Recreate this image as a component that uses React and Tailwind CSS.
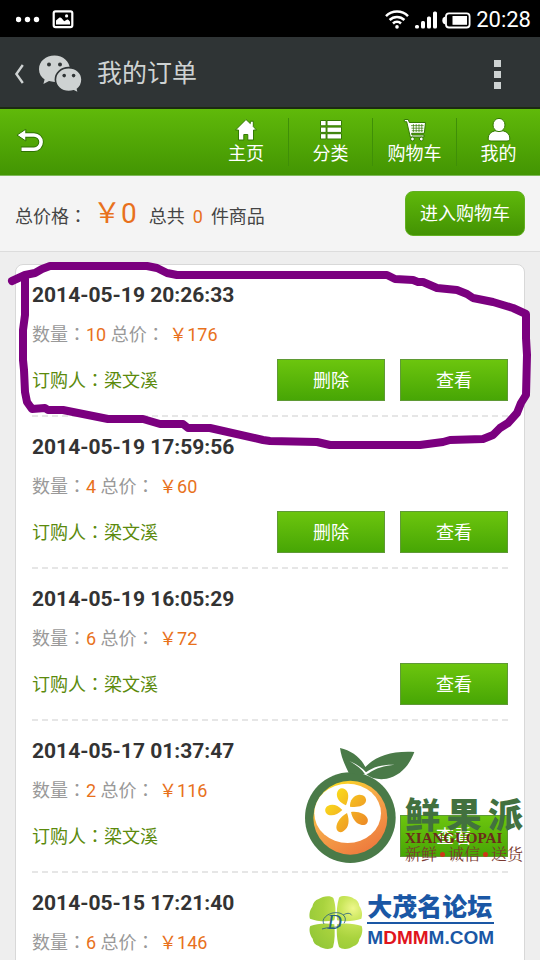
import React from 'react';

const orders = [
  { id: 1, time: '2014-05-19 20:26:33', count: 10, total: 176, buyer: '梁文溪', removable: true },
  { id: 2, time: '2014-05-19 17:59:56', count: 4, total: 60, buyer: '梁文溪', removable: true },
  { id: 3, time: '2014-05-19 16:05:29', count: 6, total: 72, buyer: '梁文溪', removable: false },
  { id: 4, time: '2014-05-17 01:37:47', count: 2, total: 116, buyer: '梁文溪', removable: false },
  { id: 5, time: '2014-05-15 17:21:40', count: 6, total: 146, buyer: '梁文溪', removable: false },
];

// The TC face sets the full-width colon in the middle of its box
const Colon = () => <span lang="zh-TW" className="font-['Noto_Sans_CJK_TC',sans-serif]">：</span>;

const StatusBar = () => (
  <div className="flex h-[37px] shrink-0 items-center bg-black pl-4 pr-[9px] pt-0.5 text-white">
    <svg width="24" height="20" viewBox="0 0 24 20" fill="currentColor" aria-hidden="true">
      <circle cx="2.5" cy="9.5" r="2.7" />
      <circle cx="11.5" cy="9.5" r="2.7" />
      <circle cx="20.5" cy="9.5" r="2.7" />
    </svg>
    <svg className="ml-3" width="22" height="20" viewBox="0 0 22 20" fill="currentColor" aria-hidden="true">
      <rect x="1.7" y="1.3" width="18.6" height="15.8" rx="1.8" fill="none" stroke="currentColor" strokeWidth="2.2" />
      <path d="M4 14.400v-4l3.200-2.600c.8-.6 1.600-.5 2.200.2l2.800 3.200 2.600-1.500c.7-.4 1.300-.3 1.800.3l1.400 1.800v2.600z" />
      <circle cx="14.6" cy="5.9" r="1.6" />
    </svg>
    <div className="ml-auto flex items-center">
      <svg width="26" height="20" viewBox="0 0 26 20" fill="none" stroke="currentColor" strokeWidth="2.5" aria-hidden="true">
        <path d="M2 6.200a15.500 15.500 0 0 1 22 0" />
        <path d="M5.600 10a10.400 10.400 0 0 1 14.800 0" />
        <path d="M9 13.500a5.700 5.700 0 0 1 8 0" />
        <circle cx="13" cy="16.900" r="1.800" fill="currentColor" stroke="none" />
      </svg>
      <svg className="ml-1" width="24" height="20" viewBox="0 0 24 20" fill="currentColor" aria-hidden="true">
        <rect x="1" y="15" width="4" height="3.5" rx="1.5" />
        <rect x="7" y="11" width="4" height="7.5" rx="1.5" />
        <rect x="13" y="6.5" width="4" height="12" rx="1.5" />
        <rect x="19" y="1.5" width="4" height="17" rx="1.5" />
      </svg>
      <svg className="ml-1" width="30" height="20" viewBox="0 0 30 20" fill="currentColor" aria-hidden="true">
        <rect x="4" y="3.3" width="23.6" height="14.2" rx="3" fill="none" stroke="currentColor" strokeWidth="1.8" />
        <path d="M3.500 6.500C1.400 7 .3 8 .3 10.400s1.100 3.600 3.200 4.100z" />
        <rect x="10.5" y="6" width="14.5" height="8.8" />
      </svg>
      <span className="ml-1 text-[22px] leading-none">20:28</span>
    </div>
  </div>
);

const TitleBar = () => (
  <header className="flex h-[72px] shrink-0 items-center border-b-2 border-[#1c2a12] bg-[#2f3435] pl-[13px] pr-[39px] pt-1 text-[#ced2d2]">
    <button type="button" aria-label="返回" className="flex items-center">
      <svg width="12" height="22" viewBox="0 0 12 22" fill="none" stroke="currentColor" strokeWidth="2.4" aria-hidden="true">
        <path d="M9.800 2 3.400 11l6.400 9" />
      </svg>
    </button>
    <svg className="ml-[13px]" width="45" height="38" viewBox="0 0 45 38" aria-hidden="true">
      <path d="M16.500.6C7.800.6 1 6.400 1 14.200c0 4.400 2.200 8 5.600 10.300L5.400 29l5.600-2.900c1.800.5 3.600.8 5.500.8 8.500 0 15.300-5.600 15.300-12.900S25 .6 16.500.6z" fill="currentColor" />
      <circle cx="11" cy="9.6" r="2" fill="#2f3435" />
      <circle cx="22" cy="9.6" r="2" fill="#2f3435" />
      <path d="M30.700 12.600c-7.500 0-13.300 5.200-13.300 12s5.800 12 13.300 12c1.900 0 3.500-.3 5.100-.8l4.700 2.300-1-4c2.900-2.200 4.500-5.600 4.500-9.500 0-6.800-5.800-12-13.300-12z" fill="currentColor" stroke="#2f3435" strokeWidth="1.6" />
      <circle cx="26.2" cy="20.6" r="1.8" fill="#2f3435" />
      <circle cx="35.6" cy="20.6" r="1.8" fill="#2f3435" />
    </svg>
    <h1 className="ml-[14px] text-[25px] leading-8">我的订单</h1>
    <button type="button" aria-label="更多" className="ml-auto flex flex-col gap-1">
      <span className="size-[7px] bg-current" />
      <span className="size-[7px] bg-current" />
      <span className="size-[7px] bg-current" />
    </button>
  </header>
);

const iconProps = {
  width: 24,
  height: 24,
  viewBox: '0 0 24 24',
  fill: '#fff',
  stroke: '#347a04',
  strokeWidth: 1,
  'aria-hidden': true,
};

const HomeIcon = () => (
  <svg {...iconProps}>
    <path d="M12 1.500 1.500 12h3v10h5.300v-5.500h4V22h5.700V12h3l-3.200-3.400V3.200h-3v2.400z" />
  </svg>
);

const ListIcon = () => (
  <svg {...iconProps}>
    <path d="M1.500 2.500h5.600v5.300H1.500zM1.500 9.100h5.600v5.300H1.500zM1.500 15.700h5.600V21H1.500zM8 2.500h14.500v5.300H8zM8 9.100h14.500v5.300H8zM8 15.700h14.500V21H8z" />
  </svg>
);

const CartIcon = () => (
  <svg {...iconProps}>
    <path d="M1.300 1.500h4l1 3h16.200l-1.200 10.800H8.600l.4 1.700h12v2H7.300L3.700 3.700H1.300z" />
    <path d="M8 7.600h12.600M8.400 10.200h12M8.800 12.700h11.400M10.400 6v8M13.200 6v8M16 6v8M18.800 6v8" fill="none" strokeWidth=".7" />
    <circle cx="9.5" cy="21" r="1.9" />
    <circle cx="18.3" cy="21" r="1.9" />
  </svg>
);

const UserIcon = () => (
  <svg {...iconProps}>
    <path d="M4 23c-2 0-3-1-2.800-3 .3-4 2.600-6.200 6.500-7.100h8.600c3.900.9 6.200 3.100 6.500 7.100.2 2-.8 3-2.800 3z" />
    <ellipse cx="12" cy="7" rx="6" ry="6.6" />
  </svg>
);

const navItems = [
  { label: '主页', Icon: HomeIcon },
  { label: '分类', Icon: ListIcon },
  { label: '购物车', Icon: CartIcon },
  { label: '我的', Icon: UserIcon },
];

const NavBar = () => (
  <nav className="flex h-[67px] shrink-0 items-center border-b border-[#7fb85a] bg-linear-to-b from-[#60b90a] to-[#439503] text-white">
    <a href="#back" aria-label="返回上页" className="ml-4">
      <svg width="28" height="26" viewBox="0 0 28 26" fill="none" aria-hidden="true">
        <path d="M9 6h9a6.900 6.900 0 0 1 0 14.200H5" stroke="#2f7203" strokeWidth="5.4" />
        <path d="M1 6.100 9.800.2v11.800z" fill="#fff" stroke="#2f7203" />
        <path d="M8.500 6H18a6.900 6.900 0 0 1 0 14.200H5.500" stroke="#fff" strokeWidth="3.6" />
      </svg>
    </a>
    <ul className="ml-auto flex">
      {navItems.map(({ label, Icon }, i) => (
        <li key={label} className={i > 0 ? 'w-[84px] border-l border-[#3f8f07]' : 'w-[84px]'}>
          <a href={`#nav-${i}`} className="flex flex-col items-center">
            <Icon />
            <span className="text-[18px] leading-6">{label}</span>
          </a>
        </li>
      ))}
    </ul>
  </nav>
);

const Summary = () => (
  <section className="flex h-[76px] shrink-0 items-center justify-between border-b border-[#dcdcdc] bg-[#f4f4f4] px-[15px] text-[18px] text-[#444]">
    <p className="flex items-baseline">
      <span>总价格<Colon /></span>
      <span className="ml-1.5 text-[28px] leading-8 text-[#e8711c]">￥0</span>
      <span className="ml-3">总共</span>
      <span className="mx-2 text-[#e8711c]">0</span>
      <span>件商品</span>
    </p>
    <button type="button" className="h-[45px] rounded-lg border border-[#62b021] bg-linear-to-b from-[#5fb80b] to-[#439303] px-[14px] text-white">
      进入购物车
    </button>
  </section>
);

const OrderButton = ({ children }) => (
  <button type="button" className="h-[42px] w-[108px] border border-[#5f9a35] bg-linear-to-b from-[#6cc50e] to-[#47a605] text-[18px] text-white">
    {children}
  </button>
);

const OrderItem = ({ order }) => (
  <li className="border-b-2 border-dashed border-[#e6e6e6] pb-[14px] pt-4">
    <h2 className="text-[21px] font-bold leading-7 text-[#333]">{order.time}</h2>
    <p className="mt-[10px] text-[18px] leading-7 text-[#999]">
      数量<Colon /><span className="text-[#e8711c]">{order.count}</span> 总价<Colon />{' '}
      <span className="text-[#e8711c]">￥{order.total}</span>
    </p>
    <div className="mt-[10px] flex items-center justify-between">
      <p className="text-[18px] text-[#5b8a0c]">订购人<Colon />{order.buyer}</p>
      <div className="flex gap-[15px]">
        {order.removable && <OrderButton>删除</OrderButton>}
        <OrderButton>查看</OrderButton>
      </div>
    </div>
  </li>
);

// Hand-drawn marker around the newest order
const MarkerLine = () => (
  <svg className="pointer-events-none absolute left-0 top-0" width="540" height="460" viewBox="0 0 540 460" fill="none" stroke="#7b007f" strokeWidth="8" strokeLinecap="round" strokeLinejoin="round" aria-hidden="true">
    <path d="M12 281 25 275 35 273 42 269 50 266H147L157 268 167 273 177 275H387L395 279 413 280 418 282 423 282 437 288 457 290 467 294 473 298 493 302 513 308 526 314V338L527 355 526 395 521 403 517 413 508 423 500 428 493 435 483 439 450 440 443 442 420 445H330L317 442 270 441 263 440 210 428H188L183 424H160L143 419H108L83 414 63 410H48L45 408 32 409 27 402 25 392 24 370 23 360 23 330 25 315V276" />
  </svg>
);

const FruitLogo = () => (
  <div className="pointer-events-none absolute bottom-24 right-[17px] flex items-end">
    <svg width="114" height="118" viewBox="36 48 342 354" aria-hidden="true">
      <defs>
        <linearGradient id="peel" x1="0" y1="0" x2=".6" y2="1">
          <stop offset="0" stopColor="#fde910" />
          <stop offset=".5" stopColor="#f6a94a" />
          <stop offset="1" stopColor="#ee7d3e" />
        </linearGradient>
        <linearGradient id="petal" gradientUnits="userSpaceOnUse" x1="105" y1="190" x2="230" y2="300">
          <stop offset="0" stopColor="#fbe51a" />
          <stop offset="1" stopColor="#ec8428" />
        </linearGradient>
      </defs>
      <circle cx="181" cy="263" r="136" fill="#4a7a48" />
      <path d="M150 54c34 8 62 28 76 57 30-32 78-49 147-45-16 43-44 72-83 80-22 4-46 0-62-14-14 2-30 2-52-4-10-20-22-44-26-74z" fill="#4a7a48" />
      <path d="M178 93c22 9 38 20 50 34 22-18 52-24 86-23-30 3-58 10-78 26l-10 4c-12-18-28-30-48-41z" fill="#fff" />
      <circle cx="181" cy="263" r="111" fill="url(#peel)" />
      <ellipse cx="173" cy="250" rx="100" ry="89" fill="#fff" />
      <g fill="url(#petal)">
        <path d="M168 226c-18-7-30-22-27-37 3-13 14-18 24-11 13 9 12 28 3 48z" />
        <path d="M180 230c-1-19 10-34 27-36 13-1 23 8 21 19-4 15-25 20-48 17z" />
        <path d="M183 246c23-3 45 6 50 21 3 13-7 20-18 18-17-4-28-18-32-39z" />
        <path d="M171 249c9 24 5 44-10 54-11 8-22 2-22-11 1-16 13-32 32-43z" />
        <path d="M157 240c-14 15-31 19-43 14-11-6-11-20-1-26 13-8 30-4 44 12z" />
      </g>
    </svg>
    <div className="-ml-[11px] w-[118px]">
      <p className="flex h-8 items-center justify-between text-[35px] font-black leading-none text-[#42713f]">
        <span>鲜</span><span>果</span><span>派</span>
      </p>
      <p className="font-['Liberation_Serif',serif] text-[15px] font-bold leading-3 text-[#6b2a1c]">XIANGUOPAI</p>
      <p className="flex items-center justify-between font-['Noto_Serif_CJK_SC','Noto_Sans_CJK_SC',serif] text-[16px] leading-5 text-[#7a3a30]">
        <span>新鲜</span><span className="size-[5px] rounded-full bg-[#cc3818]" />
        <span>诚信</span><span className="size-[5px] rounded-full bg-[#cc3818]" />
        <span>送货</span>
      </p>
    </div>
  </div>
);

const ForumLogo = () => (
  <div className="pointer-events-none absolute bottom-[10px] right-[46px] flex items-center gap-1">
    <svg width="55" height="55" viewBox="50 105 165 165" aria-hidden="true">
      <defs>
        <radialGradient id="leaf" gradientUnits="userSpaceOnUse" cx="185" cy="145" r="150">
          <stop offset="0" stopColor="#eef78c" />
          <stop offset=".25" stopColor="#c9e65a" />
          <stop offset=".6" stopColor="#a9d33e" />
          <stop offset="1" stopColor="#94c838" />
        </radialGradient>
      </defs>
      <g fill="url(#leaf)">
        <path d="M129 181c6-22 4-48-3-67-8-9-32-6-44 3-10 3-17 11-19 23-9 11-10 27-7 36 18 7 48 11 73 5z" />
        <path d="M137 181c-2-25 0-48 6-68 10-8 34-5 45 3 9 3 15 11 16 22 9 12 10 28 6 38-20 7-46 10-73 5z" />
        <path d="M129 193c2 25 2 49-4 69-9 8-32 5-43-4-10-3-17-11-18-22-9-11-12-29-7-38 20-8 48-10 72-5z" />
        <path d="M137 193c25-5 53-2 74 5 4 11 2 28-7 39-1 11-8 19-18 22-11 9-34 11-43 2-6-20-8-43-6-68z" />
      </g>
      <path d="M92 207c16-7 43-2 57-10M98 192c-10-14 10-32 32-34 24-2 40 14 28 32M155 166c10-8 22-8 26 0" fill="none" stroke="#265f80" strokeWidth="2.5" />
      <text x="108" y="207" className="font-['Liberation_Serif',serif] italic" fontSize="60" fill="#265f80">D</text>
    </svg>
    <div className="text-[#1a57a5]">
      <p className="border-b-2 border-[#1a57a5] text-[25px] font-black leading-7">大茂名论坛</p>
      <p className="pt-0.5 font-['Liberation_Sans',sans-serif] text-[19px] font-bold leading-6">
        M<span className="text-[#e0141c]">DMM</span>M.COM
      </p>
    </div>
  </div>
);

const App = () => {
  return (
    <div lang="zh-CN" className="relative flex h-screen flex-col overflow-hidden bg-[#eee] font-[Roboto,'Noto_Sans_CJK_SC',sans-serif]">
      <StatusBar />
      <TitleBar />
      <NavBar />
      <Summary />
      <main className="flex-1 overflow-y-auto px-[15px] pt-3 [scrollbar-width:none]">
        <ul className="rounded-lg border border-[#d8d8d8] bg-white px-4">
          {orders.map((order) => (
            <OrderItem key={order.id} order={order} />
          ))}
        </ul>
      </main>
      <MarkerLine />
      <FruitLogo />
      <ForumLogo />
    </div>
  );
};

export default App;
